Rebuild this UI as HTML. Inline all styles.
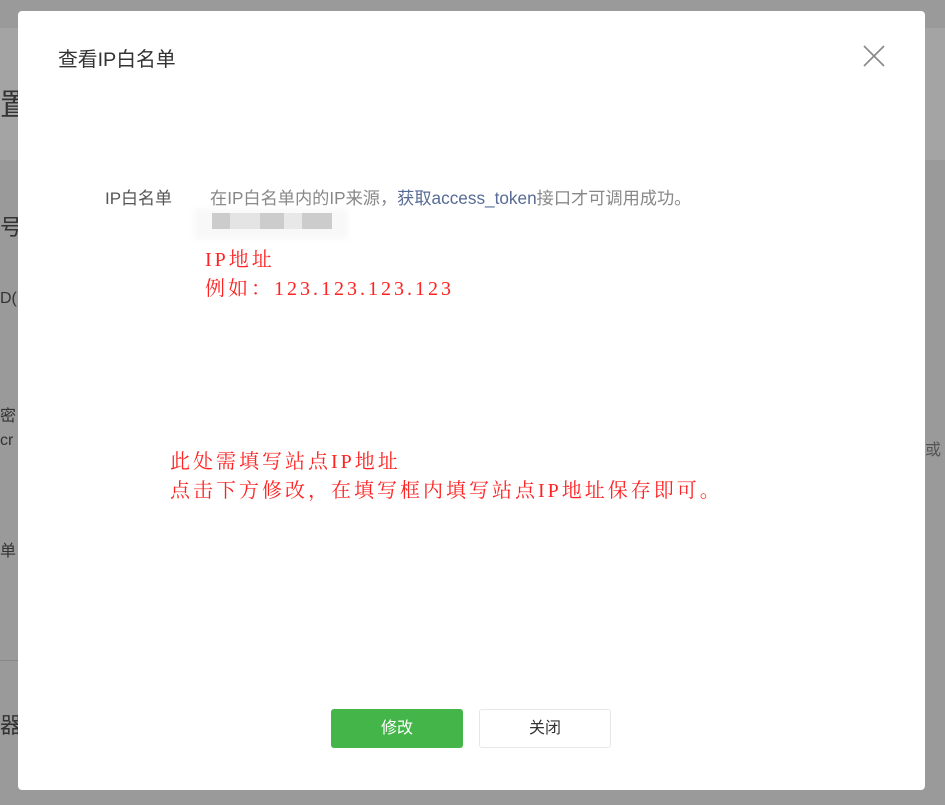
<!DOCTYPE html><html><head><meta charset="utf-8"><style>
body{margin:0;width:945px;height:805px;background:#9a9a9a;position:relative;overflow:hidden;font-family:"Liberation Sans","Noto Sans CJK SC",sans-serif}
.band{position:absolute;left:0;right:0;top:28px;height:132px;background:#a4a4a4}
.bg{position:absolute;color:#333;font-size:22px}
.modal{position:absolute;left:18px;top:11px;width:907px;height:779px;background:#fff;border-radius:4px}
.t{position:absolute;white-space:nowrap}
.red{color:#f22;font-family:"Liberation Serif","Noto Serif CJK SC",serif;font-size:20px;letter-spacing:3px}
.btn{position:absolute;top:698px;width:132px;height:39px;border-radius:3px;font-size:16px;text-align:center;line-height:39px}
</style></head><body>
<div class="band"></div>
<div class="bg" style="left:0;top:80px;font-size:30px">置</div>
<div class="bg" style="left:0;top:210px">号</div>
<div class="bg" style="left:0;top:290px;font-size:16px">D(</div>
<div class="bg" style="left:0;top:402px;font-size:16px">密</div>
<div class="bg" style="left:0;top:432px;font-size:16px">cr</div>
<div class="bg" style="left:0;top:537px;font-size:16px">单</div>
<div class="bg" style="left:0;top:708px">器</div>
<div class="bg" style="left:925px;top:436px;font-size:16px;color:#555">或</div>
<div style="position:absolute;left:0;top:660px;width:18px;height:1px;background:#888"></div>
<div class="modal">
<div class="t" style="left:40px;top:32px;font-size:19.8px;color:#333">查看IP白名单</div>
<svg style="position:absolute;left:845px;top:34px" width="22" height="22" viewBox="0 0 22 22"><path d="M1 1L21 21M21 1L1 21" stroke="#888" stroke-width="1.6"/></svg>
<div class="t" style="left:87px;top:173px;font-size:17px;color:#555">IP白名单</div>
<div class="t" style="left:192px;top:173px;font-size:17.2px;color:#888">在IP白名单内的IP来源，<span style="color:#576b95">获取access_token</span>接口才可调用成功。</div>
<div style="position:absolute;left:176px;top:198px;width:154px;height:30px;background:#f8f8f8;filter:blur(3px)"></div>
<div style="position:absolute;left:194px;top:202px;width:120px;height:16px;background:linear-gradient(90deg,#ccc 0 15%,#e4e4e4 15% 40%,#ccc 40% 60%,#e8e8e8 60% 75%,#ccc 75%)"></div>
<div class="t red" style="left:187px;top:232px">IP地址</div>
<div class="t red" style="left:187px;top:261px;letter-spacing:3px">例如：123.123.123.123</div>
<div class="t red" style="left:152px;top:434px">此处需填写站点IP地址</div>
<div class="t red" style="left:152px;top:463px">点击下方修改，在填写框内填写站点IP地址保存即可。</div>
<div class="btn" style="left:313px;background:#44b549;color:#fff">修改</div>
<div class="btn" style="left:461px;width:130px;height:37px;line-height:37px;border:1px solid #e4e8eb;color:#333">关闭</div>
</div>
</body></html>
